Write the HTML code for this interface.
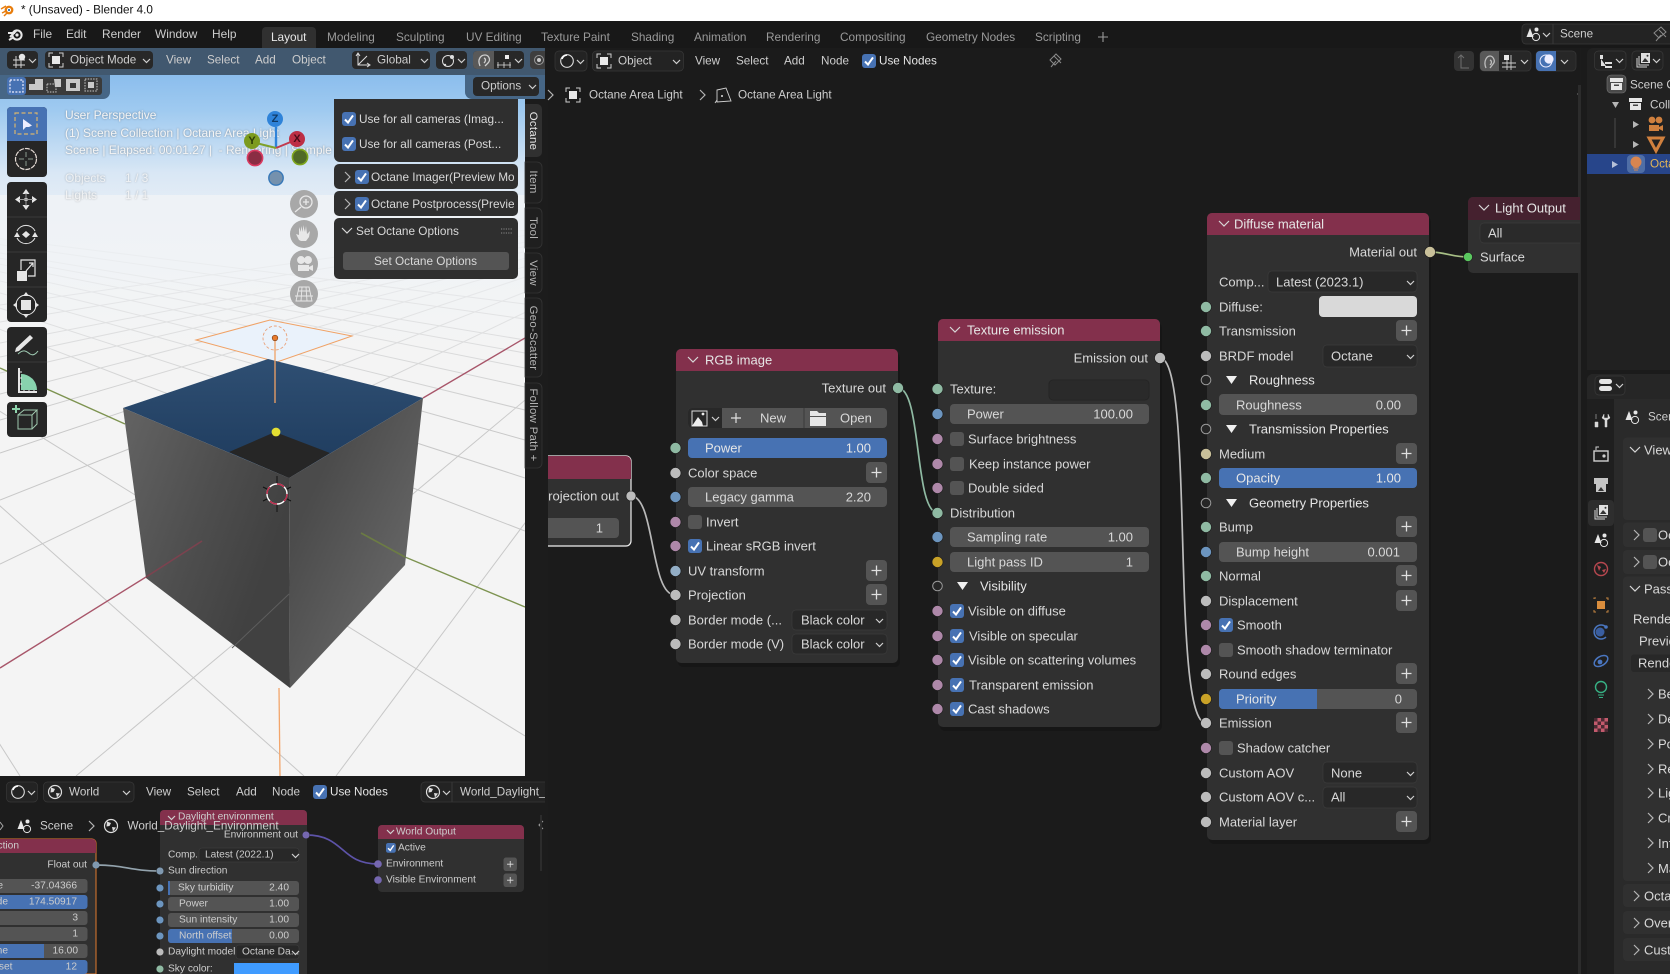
<!DOCTYPE html>
<html><head><meta charset="utf-8"><title>Blender 4.0</title>
<style>
html,body{margin:0;padding:0;width:1670px;height:974px;overflow:hidden;background:#1c1c1c}
svg{display:block;position:absolute;left:0;top:0}
text{font-family:"Liberation Sans",sans-serif;dominant-baseline:central;white-space:pre}
.h{font-size:11.7px;fill:#cdcdcd}
.t{font-size:11.9px;fill:#cdcdcd}
.m{font-size:11.8px;fill:#9a9a9a}
.n{font-size:13px;fill:#d8d8d8}
.p{font-size:11.8px;fill:#d8d8d8}
.w{font-size:13px;fill:#e6e6e6}
.s{font-size:10.2px;fill:#cdcdcd}
.v{font-size:11.4px;letter-spacing:.3px;fill:#b5b5b5;text-anchor:middle}
.hud{font-size:12px;fill:#f4f4f4;filter:drop-shadow(0 0 1px rgba(0,0,0,.35))}
.e{text-anchor:end}
.c{text-anchor:middle}
.f{fill:#545454}.dd{fill:#282828;stroke:#3b3b3b;stroke-width:.7}
.sg{fill:#8fbaa3}.sw{fill:#bcbcbc}.sb{fill:#6c95bf}.sp{fill:#ae88a9}.sy{fill:#c9a227}.st{fill:#c9c09a}.sv{fill:#7567b0}
.so{fill:#262626;stroke:#9a9a9a;stroke-width:1}
</style></head><body>
<svg width="1670" height="974" viewBox="0 0 1670 974" xmlns="http://www.w3.org/2000/svg">
<defs>
<linearGradient id="sky" x1="0" y1="0" x2="0" y2="1"><stop offset="0" stop-color="#7cb4ea"/><stop offset=".25" stop-color="#9fcaf0"/><stop offset=".5" stop-color="#d9e7f5"/><stop offset=".72" stop-color="#eef2f6"/><stop offset="1" stop-color="#f4f4f4"/></linearGradient>
<linearGradient id="fade" x1="0" y1="0" x2="0" y2="1"><stop offset="0" stop-color="#eef2f6" stop-opacity="1"/><stop offset=".3" stop-color="#f0f3f6" stop-opacity=".85"/><stop offset=".65" stop-color="#f3f4f5" stop-opacity=".45"/><stop offset="1" stop-color="#f4f4f4" stop-opacity="0"/></linearGradient>
<linearGradient id="lf" gradientUnits="userSpaceOnUse" x1="125" y1="440" x2="290" y2="500"><stop offset="0" stop-color="#616161"/><stop offset=".55" stop-color="#4e4e4e"/><stop offset="1" stop-color="#414141"/></linearGradient>
<linearGradient id="rf" gradientUnits="userSpaceOnUse" x1="290" y1="540" x2="420" y2="600"><stop offset="0" stop-color="#4b4b4b"/><stop offset="1" stop-color="#6a6a6a"/></linearGradient>
<linearGradient id="tf" x1="0" y1="0" x2="0" y2="1"><stop offset="0" stop-color="#2f4f73"/><stop offset="1" stop-color="#1d3a5c"/></linearGradient>
<g id="ck"><rect width="14" height="14" rx="3" fill="#4772b3"/><path d="M3 7.5 6 10.6 11 3.4" fill="none" stroke="#fff" stroke-width="2"/></g>
<rect id="nk" width="14" height="14" rx="3" fill="#545454"/>
<g id="pl"><rect width="21" height="21" rx="4" fill="#545454"/><path d="M10.5 5.5v10M5.5 10.5h10" stroke="#e0e0e0" stroke-width="1.3"/></g>
<path id="dn" d="M0 0l3.5 3.5L7 0" fill="none" stroke="#d0d0d0" stroke-width="1.2"/>
<path id="nc" d="M0 0l5 5 5-5" fill="none" stroke="#d8d8d8" stroke-width="1.2"/>
<path id="rt" d="M0 0l5 5-5 5" fill="none" stroke="#b5b5b5" stroke-width="1.2"/>
<path id="tr" d="M0 0h11l-5.5 8z" fill="#f0f0f0"/>
<g id="ob"><path d="M0 4V0h4M10 0h4v4M14 10v4h-4M4 14H0v-4" fill="none" stroke="#cfcfcf" stroke-width="1"/><rect x="3" y="3" width="8" height="8" fill="#e8e8e8"/></g>
<g id="nd"><circle cx="7" cy="7" r="6.3" fill="none" stroke="#ddd" stroke-width="1.1"/><path d="M7 1A6 6 0 0 0 2 5" stroke="#fff" stroke-width="1.6" fill="none"/></g>
<g id="wd"><circle cx="7" cy="7" r="6.5" fill="none" stroke="#ddd" stroke-width="1.2"/><path d="M3 2.5l4 1.5-1.5 3-3 .5zM8 8l4 .5-3 4z" fill="#ddd"/></g>
<g id="sc"><path d="M4 1l3.5 9H.5z" fill="#e6e6e6"/><circle cx="10.5" cy="2.5" r="2" fill="#e6e6e6"/><circle cx="10" cy="10" r="3.6" fill="none" stroke="#e6e6e6" stroke-width="1"/></g>
<g id="lyr"><path d="M1 5v9h10M3 3v9h10" fill="none" stroke="#d5d5d5" stroke-width="1"/><rect x="5" y="0" width="9" height="10" fill="#e0e0e0"/><path d="M6 9l3-4 2 2 1.5 2z" fill="#333"/><circle cx="11.5" cy="2.8" r="1" fill="#333"/></g>
<clipPath id="vp"><rect x="0" y="48" width="525" height="728"/></clipPath>
<clipPath id="me"><rect x="548" y="48" width="1032" height="926"/></clipPath>
<clipPath id="be"><rect x="0" y="776" width="545" height="198"/></clipPath>
<clipPath id="p1"><rect x="334" y="164" width="180" height="52"/></clipPath>
</defs>

<!-- title bar -->
<rect width="1670" height="21" fill="#fff"/>
<circle cx="9" cy="10" r="4.4" fill="#e87d0d"/><circle cx="9" cy="10" r="2.1" fill="#fff"/><circle cx="9" cy="10" r="1.1" fill="#2a6fb0"/><path d="M1 9l5-3M2 13l4-2M4 16l3-3" stroke="#e87d0d" stroke-width="1.5"/>
<text x="21" y="10" style="font-size:11.7px;fill:#111">* (Unsaved) - Blender 4.0</text>

<!-- top bar -->
<rect y="21" width="1670" height="27" fill="#181818"/>
<g fill="none" stroke="#e8e8e8" stroke-width="2"><circle cx="17" cy="35" r="4.6"/><path d="M8 33h7M10 37l7-7M9 40l5-3"/></g><circle cx="17" cy="35" r="1.6" fill="#e8e8e8"/>
<text class="t" x="33" y="34">File</text><text class="t" x="66" y="34">Edit</text><text class="t" x="102" y="34">Render</text><text class="t" x="155" y="34">Window</text><text class="t" x="212" y="34">Help</text>
<path d="M262 48V31a4 4 0 0 1 4-4h46a4 4 0 0 1 4 4v17z" fill="#303030"/>
<text class="m" x="271" y="37" style="fill:#e8e8e8">Layout</text>
<text class="m" x="327" y="37">Modeling</text><text class="m" x="396" y="37">Sculpting</text><text class="m" x="466" y="37">UV Editing</text><text class="m" x="541" y="37">Texture Paint</text><text class="m" x="631" y="37">Shading</text><text class="m" x="694" y="37">Animation</text><text class="m" x="766" y="37">Rendering</text><text class="m" x="840" y="37">Compositing</text><text class="m" x="926" y="37">Geometry Nodes</text><text class="m" x="1035" y="37">Scripting</text>
<path d="M1103 32v10M1098 37h10" stroke="#9a9a9a" stroke-width="1.1"/>
<rect x="1522" y="24" width="160" height="20" rx="4" fill="#232323" stroke="#3a3a3a" stroke-width=".7"/><path d="M1553 24v20" stroke="#3a3a3a"/>
<use href="#sc" x="1526" y="27"/><use href="#dn" x="1543" y="33"/>
<text class="h" x="1560" y="34">Scene</text>
<path d="M1656 41l5-6M1659 30l7 7M1661 27l5 5-7 6-5-5z" fill="none" stroke="#8a8a8a" stroke-width="1"/>

<!-- 3D viewport -->
<g clip-path="url(#vp)">
<rect x="0" y="48" width="525" height="250" fill="url(#sky)"/>
<rect x="0" y="298" width="525" height="480" fill="#f4f4f4"/>
<g stroke="#c8c8c8" stroke-width="1" fill="none">
<path d="M770 195L336 776M770 195L76 776M770 195L0 564M770 195L0 500M770 195L0 453M770 195L0 420M770 195L0 394M770 195L0 373M770 195L0 357M770 195L0 343M770 195L0 322M770 195L0 305"/>
<path d="M-350 195L20 776M-350 195L304 776M-350 195L525 736M-350 195L525 531M-350 195L525 478M-350 195L525 440M-350 195L525 410M-350 195L525 387M-350 195L525 368M-350 195L525 353M-350 195L525 340M-350 195L525 319M-350 195L525 304"/>
</g>
<rect x="0" y="195" width="525" height="235" fill="url(#fade)"/>
<path d="M0 668L146 577M423 398L525 338" stroke="#a8566a" stroke-width="1.4"/>
<path d="M0 368L125 424M405 557L525 607" stroke="#7d9350" stroke-width="1.4"/>
<path d="M279 688L280 776" stroke="#f2a56b" stroke-width="1.3"/>
<!-- area light -->
<path d="M196 340L270 320 352 336 277 362z" fill="#eaf2fb" stroke="#f0a266" stroke-width="1"/>
<circle cx="275" cy="338" r="12" fill="none" stroke="#e9a27a" stroke-dasharray="3 2" stroke-width=".9"/>
<!-- cube -->
<path d="M123 408L268 359 423 398 289 478z" fill="url(#tf)"/>
<path d="M229 452L275 432 330 453 289 478z" fill="#262626"/>
<path d="M123 408L289 478 290 688 146 578z" fill="url(#lf)"/>
<path d="M289 478L423 398 405 565 290 688z" fill="url(#rf)"/>
<path d="M146 577L202 541" stroke="#85404f" stroke-width="1.6" opacity=".85"/>
<path d="M361 533L405 557" stroke="#6f8240" stroke-width="1.6" opacity=".85"/>
<path d="M289 594L232 648" stroke="#5e5e5e" stroke-width="1"/>
<path d="M275 338L275 403" stroke="#f0a266" stroke-width="1.3"/>
<circle cx="275" cy="338" r="2.8" fill="#e77b2d" stroke="#7d3a12" stroke-width=".6"/>
<circle cx="276" cy="432" r="4.4" fill="#e3de32"/>
<!-- 3d cursor -->
<path d="M277 476v9M277 503v9M263 487l6 3M285 498l6 3M263 501l6-3M285 490l6-3" stroke="#111" stroke-width="1"/>
<circle cx="277" cy="494" r="10" fill="none" stroke="#fff" stroke-width="1.4"/>
<circle cx="277" cy="494" r="10" fill="none" stroke="#c0284a" stroke-width="1.4" stroke-dasharray="7.8 7.8"/>
<!-- HUD -->
<text class="hud" x="65" y="115">User Perspective</text>
<text class="hud" x="65" y="133">(1) Scene Collection | Octane Area Light</text>
<text class="hud" x="65" y="150">Scene | Elapsed: 00:01.27 |  - Rendering | Sample 5</text>
<text class="hud" x="65" y="178" opacity=".8">Objects</text><text class="hud" x="125" y="178" opacity=".8">1 / 3</text>
<text class="hud" x="65" y="195" opacity=".8">Lights</text><text class="hud" x="125" y="195" opacity=".8">1 / 1</text>
<!-- gizmo -->
<path d="M276 148V127" stroke="#2f83d9" stroke-width="2.4"/><path d="M276 148L293 141" stroke="#c23a4e" stroke-width="2"/><path d="M276 148L256 143" stroke="#7fa12a" stroke-width="2"/>
<circle cx="255" cy="158" r="7.6" fill="#8a2d43" stroke="#da3a60" stroke-width="1.6"/>
<circle cx="300" cy="157" r="7.6" fill="#4f6a26" stroke="#7fa71d" stroke-width="1.6"/>
<circle cx="276" cy="178" r="7.2" fill="#7591ad" stroke="#3778b8" stroke-width="1.4"/>
<circle cx="275" cy="119" r="8" fill="#2f83d9"/><text x="275" y="119" class="c" style="font-size:11px;font-weight:bold;fill:#103a66">Z</text>
<circle cx="297" cy="139" r="8" fill="#bd2f45"/><text x="297" y="139" class="c" style="font-size:11px;font-weight:bold;fill:#4a0c18">X</text>
<circle cx="252" cy="141" r="8" fill="#7c9b1f"/><text x="252" y="141" class="c" style="font-size:11px;font-weight:bold;fill:#2c3a05">Y</text>
<!-- nav buttons -->
<g fill="#a8a8a8"><circle cx="304" cy="204" r="14"/><circle cx="304" cy="234" r="14"/><circle cx="304" cy="264" r="14"/><circle cx="304" cy="294" r="14"/></g>
<g fill="none" stroke="#e8e8e8" stroke-width="1.3"><circle cx="306" cy="202" r="6"/><path d="M301 207l-6 5M306 199v6M303 202h6"/><path d="M299 240l-3-6 3 1v-8l2 5v-6l2 6v-7l2 7 1-6 1 8 3-3-1 6-3 4h-5z" fill="#e8e8e8" stroke="none"/><circle cx="301" cy="260" r="3.3" fill="#e8e8e8"/><circle cx="308" cy="260" r="3.3" fill="#e8e8e8"/><rect x="298" y="265" width="11" height="6" fill="#e8e8e8" stroke="none"/><path d="M309 267l4-2v6l-4-2z" fill="#e8e8e8" stroke="none"/><path d="M299 287h10l3 14h-16zM295 296h18M298 291h12M302 287l-1 14M306 287l1 14" stroke-width=".9"/></g>
</g>

<!-- viewport side strip -->
<rect x="525" y="99" width="23" height="677" fill="#1c1c1c"/>

<!-- viewport header -->
<rect x="0" y="48" width="545" height="27" fill="#41586f"/>
<path d="M0 75H110V92a7 7 0 0 1-7 7H0z" fill="#466686"/>
<path d="M465 75H545V99H472a7 7 0 0 1-7-7z" fill="#466686"/>
<g>
<rect x="7" y="51" width="31" height="18" rx="4" fill="#282828"/>
<path d="M13 60h12M13 65h12M16 56v12M21 56v12" stroke="#ddd" stroke-width=".9"/><circle cx="22" cy="57" r="3.2" fill="#e8e8e8"/><use href="#dn" x="29" y="59"/>
<rect x="45" y="51" width="108" height="18" rx="4" fill="#282828"/><use href="#ob" x="49" y="53"/>
<text class="h" x="70" y="60">Object Mode</text><use href="#dn" x="143" y="59"/>
<text class="h" x="166" y="60">View</text><text class="h" x="207" y="60">Select</text><text class="h" x="255" y="60">Add</text><text class="h" x="292" y="60">Object</text>
<rect x="352" y="51" width="78" height="18" rx="4" fill="#282828"/>
<path d="M358 54v11h11M358 65l9-9M356 56l2-3 2 3M367 63l3 2-3 2" fill="none" stroke="#ddd" stroke-width="1"/>
<text class="h" x="377" y="60">Global</text><use href="#dn" x="421" y="59"/>
<rect x="436" y="51" width="31" height="18" rx="4" fill="#282828"/><circle cx="448" cy="61" r="5.5" fill="none" stroke="#ddd"/><circle cx="452" cy="57" r="2" fill="#ddd"/><circle cx="445" cy="65" r="1.2" fill="#ddd"/><use href="#dn" x="458" y="59"/>
<rect x="473" y="51" width="51" height="18" rx="4" fill="#282828"/><path d="M477 51h17v18h-17a4 4 0 0 1-4-4V55a4 4 0 0 1 4-4z" fill="#595959"/>
<path d="M480 66c-3-7 1-11 5-11s6 5 3 8l-3 3M484 63c2-2 2-4 0-5" fill="none" stroke="#cfcfcf" stroke-width="1.3"/>
<path d="M497 65h14M498 62v6M504 62v6M510 62v6" stroke="#ddd" stroke-width=".8"/><rect x="505" y="55" width="4" height="4" fill="#eee"/><use href="#dn" x="515" y="59"/>
<rect x="530" y="51" width="20" height="18" rx="4" fill="#3e3e3e"/><circle cx="539" cy="60" r="4.5" fill="none" stroke="#9a9a9a"/><circle cx="539" cy="60" r="2" fill="#ccc"/>
</g>
<rect x="7" y="77" width="95" height="18" rx="3" fill="#3a3a3a"/>
<rect x="7" y="77" width="19" height="18" rx="3" fill="#4772b3"/><rect x="10" y="80" width="13" height="12" fill="none" stroke="#eef" stroke-width="1.2" stroke-dasharray="2 1.4"/>
<path d="M29 84h6v-5h8v11H29z" fill="#c9c9c9"/>
<path d="M54 79h7v8h-6" fill="#c9c9c9"/><rect x="47" y="84" width="9" height="8" fill="none" stroke="#c9c9c9" stroke-dasharray="1.5 1.2"/>
<rect x="66" y="79" width="14" height="12" fill="#c9c9c9"/><rect x="70" y="83" width="6" height="5" fill="#3a3a3a"/>
<rect x="85" y="79" width="12" height="12" fill="none" stroke="#c9c9c9" stroke-dasharray="1.5 1.2"/><rect x="88" y="82" width="6" height="6" fill="#c9c9c9"/>
<rect x="473" y="77" width="66" height="19" rx="4" fill="#282828"/><text class="h" x="481" y="86">Options</text><use href="#dn" x="529" y="85"/>

<!-- tools -->
<rect x="7" y="107" width="40" height="70" rx="4" fill="#262626"/>
<path d="M7 141V111a4 4 0 0 1 4-4h32a4 4 0 0 1 4 4v30z" fill="#4772b3"/>
<rect x="15" y="113" width="22" height="21" fill="none" stroke="#d9b56e" stroke-width="1.2" stroke-dasharray="4 2.5"/>
<path d="M23 119v11l3-3 3 0 3-1.5z" fill="#eef"/>
<circle cx="26" cy="159" r="10.5" fill="none" stroke="#e6dcd6" stroke-width="1.2" stroke-dasharray="5 1"/>
<path d="M26 152v5M26 161v5M19 159h5M28 159h5" stroke="#8a9a8e" stroke-width="1"/>
<rect x="7" y="182" width="40" height="140" rx="4" fill="#262626"/>
<path d="M7 217h40M7 252h40M7 287h40" stroke="#3a3a3a"/>
<g fill="#e6e6e6"><path d="M26 189l3.500 5h-7zM26 210l-3.500-5h7zM15 199.500l5-3.500v7zM37 199.500l-5-3.500v7z"/><rect x="24.500" y="198" width="3" height="3"/></g>
<path d="M26 193v13M19 199.500h14" stroke="#9a9a9a" stroke-width="1"/>
<g fill="none" stroke="#e6e6e6" stroke-width="1"><path d="M17 231a10 10 0 0 1 18 0M17 238a10 10 0 0 0 18 0"/></g><path d="M22 234.500l4-3.500 4 3.500-4 3.500z" fill="#e6e6e6"/><path d="M14 237l3-5 3 5zM32 237l3-5 3 5z" fill="#e6e6e6"/>
<rect x="17" y="271" width="10" height="10" fill="#e6e6e6"/><path d="M21 270v-10h14v16H28M26 271l7-8M29 263h4v4" fill="none" stroke="#e6e6e6" stroke-width="1.2"/>
<circle cx="26" cy="305" r="10" fill="none" stroke="#e6e6e6" stroke-width="1"/><rect x="21" y="300" width="10" height="10" fill="#e6e6e6"/><path d="M26 292l3 4h-6zM26 318l3-4h-6zM13 305l4-3v6zM39 305l-4-3v6z" fill="#e6e6e6"/>
<rect x="7" y="327" width="40" height="70" rx="4" fill="#262626"/><path d="M7 362h40" stroke="#3a3a3a"/>
<path d="M16 348l14-13 3 3-14 13-4 1z" fill="#e6e6e6"/><path d="M18 354c6-6 9-2 12 0 3 2 6 0 8-3" fill="none" stroke="#9dc8b0" stroke-width="1"/>
<path d="M19 368v24h18" fill="none" stroke="#e6e6e6" stroke-width="2"/><path d="M21 390V374a16 16 0 0 1 16 16z" fill="#88d3ae"/><path d="M19 372h3M19 378h3M19 384h3M24 392v-2M29 392v-2M34 392v-2" stroke="#e6e6e6"/>
<rect x="7" y="402" width="40" height="35" rx="4" fill="#262626"/>
<path d="M18 415h14v14H18zM18 415l6-5h13l-5 5M37 410v14l-5 5" fill="none" stroke="#9fc8ae" stroke-width="1"/><path d="M16 405v8M12 409h8" stroke="#8ed4ac" stroke-width="2"/>

<!-- N panel -->
<g fill="#2f2f2f">
<path d="M334 99H518V156a6 6 0 0 1-6 6H340a6 6 0 0 1-6-6z"/>
<rect x="334" y="164" width="184" height="25" rx="5"/>
<rect x="334" y="191" width="184" height="25" rx="5"/>
<rect x="334" y="218" width="184" height="61" rx="5"/>
</g>
<use href="#ck" x="342" y="112"/><text class="p" x="359" y="119">Use for all cameras (Imag...</text>
<use href="#ck" x="342" y="137"/><text class="p" x="359" y="144">Use for all cameras (Post...</text>
<use href="#rt" x="345" y="172"/><use href="#ck" x="355" y="170"/>
<use href="#rt" x="345" y="199"/><use href="#ck" x="355" y="197"/>
<g clip-path="url(#p1)"><text class="p" x="371" y="177">Octane Imager(Preview Mo</text><text class="p" x="371" y="204">Octane Postprocess(Previe</text></g>
<use href="#nc" x="342" y="228"/><text class="p" x="356" y="231">Set Octane Options</text>
<path d="M501 229h11M501 233h11" stroke="#777" stroke-width="1.2" stroke-dasharray="1.2 1.2"/>
<rect x="343" y="252" width="166" height="18" rx="3" fill="#545454"/><text class="p c" x="425.500" y="261">Set Octane Options</text>

<!-- side tabs -->
<g fill="#1f1f1f" stroke="#343434" stroke-width=".8">
<path d="M525 162h12a5 5 0 0 1 5 5v31a5 5 0 0 1-5 5h-12z"/><path d="M525 208h12a5 5 0 0 1 5 5v30a5 5 0 0 1-5 5h-12z"/><path d="M525 253h12a5 5 0 0 1 5 5v30a5 5 0 0 1-5 5h-12z"/><path d="M525 298h12a5 5 0 0 1 5 5v69a5 5 0 0 1-5 5h-12z"/><path d="M525 383h12a5 5 0 0 1 5 5v75a5 5 0 0 1-5 5h-12z"/>
</g>
<path d="M525 104h12a5 5 0 0 1 5 5v43a5 5 0 0 1-5 5h-12z" fill="#303030"/>
<text class="v" style="fill:#e6e6e6" transform="translate(533 131) rotate(90)">Octane</text>
<text class="v" transform="translate(533 182) rotate(90)">Item</text>
<text class="v" transform="translate(533 228) rotate(90)">Tool</text>
<text class="v" transform="translate(533 273) rotate(90)">View</text>
<text class="v" transform="translate(533 338) rotate(90)">Geo-Scatter</text>
<text class="v" transform="translate(533 425) rotate(90)">Follow Path +</text>

<!-- main node editor -->
<rect x="548" y="48" width="1032" height="926" fill="#1b1b1b"/>
<rect x="545" y="48" width="3" height="51" fill="#1b1b1b"/>
<!-- header -->
<rect x="555" y="51" width="32" height="20" rx="4" fill="#232323" stroke="#383838" stroke-width=".7"/><use href="#nd" x="560" y="54"/><use href="#dn" x="577" y="60"/>
<rect x="592.500" y="51" width="91" height="20" rx="4" fill="#232323" stroke="#383838" stroke-width=".7"/><use href="#ob" x="597" y="54"/>
<text class="h" x="618" y="61">Object</text><use href="#dn" x="673" y="60"/>
<text class="h" x="695" y="61">View</text><text class="h" x="736" y="61">Select</text><text class="h" x="784" y="61">Add</text><text class="h" x="821" y="61">Node</text>
<use href="#ck" x="862" y="54"/><text class="h" style="fill:#e6e6e6" x="879" y="61">Use Nodes</text>
<path d="M1051 67l5-6M1054 56l7 7M1056 54l5 5-6 6-5-5z" fill="none" stroke="#8a8a8a" stroke-width="1"/>
<use href="#rt" x="548" y="90"/><use href="#ob" x="566" y="88"/><text class="h" x="589" y="95">Octane Area Light</text>
<use href="#rt" x="700" y="90"/><path d="M717 90l9-2 5 13-14 1zM717 100l-2 3" fill="none" stroke="#d0d0d0" stroke-width=".9"/><circle cx="722" cy="96" r="1" fill="#ddd"/><text class="h" x="738" y="95">Octane Area Light</text>
<rect x="1454" y="51" width="20" height="20" rx="4" fill="#333"/><path d="M1458 58l3-3 3 3M1461 55v13h8" fill="none" stroke="#6f6f6f"/>
<rect x="1480" y="51" width="51" height="20" rx="4" fill="#272727" stroke="#383838" stroke-width=".7"/><path d="M1484 51h15v20h-15a4 4 0 0 1-4-4V55a4 4 0 0 1 4-4z" fill="#595959"/>
<path d="M1486 68c-3-7 1-12 4-12s6 5 3 8l-3 4M1490 65c2-2 2-4 0-5" fill="none" stroke="#bdbdbd" stroke-width="1.3"/>
<rect x="1504" y="55" width="5" height="5" fill="#e8e8e8"/><path d="M1502 63h14M1502 67h14M1507 60v10M1511 55v15" stroke="#cfcfcf" stroke-width=".9"/><use href="#dn" x="1521" y="60"/>
<rect x="1536" y="51" width="40" height="20" rx="4" fill="#272727" stroke="#383838" stroke-width=".7"/><path d="M1540 51h16v20h-16a4 4 0 0 1-4-4V55a4 4 0 0 1 4-4z" fill="#4772b3"/>
<circle cx="1546" cy="61" r="6" fill="none" stroke="#eef" stroke-width="1"/><circle cx="1549" cy="59" r="4.600" fill="#eef"/><use href="#dn" x="1561" y="60"/>
<path d="M1582 90l-4 4 4 4" fill="none" stroke="#9a9a9a" stroke-width="1.2"/>
<rect x="1578" y="85" width="3" height="889" fill="#2c2c2c"/>

<g clip-path="url(#me)">
<!-- links -->
<g fill="none" stroke-width="1.7">
<path d="M631 496C655 496 650 595 675 595" stroke="#b8b8b8"/>
<path d="M898 388C922 388 914 513 938 513" stroke="#8fbaa3"/>
<path d="M1160 358C1195 358 1170 723 1206 723" stroke="#bcbcbc"/>
<path d="M1430 252C1445 252 1452 257 1468 257" stroke="#a7bf85"/>
</g>
<!-- fragment node -->
<rect x="520" y="456" width="111" height="90" rx="5" fill="#303030" stroke="#f0f0f0" stroke-width="1.2"/>
<path d="M520 479V461a5 5 0 0 1 5-5h101a5 5 0 0 1 5 5v18z" fill="#83304c"/>
<text class="n e" x="619" y="496">Projection out</text>
<rect x="500" y="518" width="119" height="20" rx="4" class="f"/><text class="n e" x="603" y="528">1</text>

<!-- RGB node -->
<rect x="678" y="353" width="222" height="314" rx="5" fill="#121212" opacity=".5"/>
<rect x="676" y="349" width="222" height="314" rx="5" fill="#303030"/>
<path d="M676 371V354a5 5 0 0 1 5-5h212a5 5 0 0 1 5 5v17z" fill="#83304c"/>
<use href="#nc" x="688" y="357"/><text class="w" x="705" y="360">RGB image</text>
<text class="n e" x="886" y="388">Texture out</text>
<rect x="688" y="408" width="199" height="20" rx="4" fill="#545454"/><path d="M692 408h30v20h-30a4 4 0 0 1-4-4v-12a4 4 0 0 1 4-4z" fill="#282828"/>
<rect x="692" y="411" width="15" height="15" fill="none" stroke="#ddd" stroke-width="1"/><path d="M692 426l6-9 4 5 1 4z" fill="#eee"/><circle cx="703" cy="414" r="1.400" fill="#eee"/><use href="#dn" x="712" y="417"/>
<path d="M736 413v10M731 418h10" stroke="#e0e0e0" stroke-width="1.2"/><text class="n" x="760" y="418">New</text>
<path d="M804 408v20" stroke="#3a3a3a"/><path d="M810 411h7l2 2h7v3h-16zM810 417h16v9h-16z" fill="#e6e6e6"/><text class="n" x="840" y="418">Open</text>
<rect x="688" y="438" width="199" height="20" rx="4" fill="#4772b3"/><text class="w" x="705" y="448">Power</text><text class="w e" x="871" y="448">1.00</text>
<text class="n" x="688" y="473">Color space</text><use href="#pl" x="866" y="462"/>
<rect x="688" y="487" width="199" height="20" rx="4" class="f"/><text class="n" x="705" y="497">Legacy gamma</text><text class="n e" x="871" y="497">2.20</text>
<use href="#nk" x="688" y="515"/><text class="n" x="706" y="522">Invert</text>
<use href="#ck" x="688" y="539"/><text class="n" x="706" y="546">Linear sRGB invert</text>
<text class="n" x="688" y="571">UV transform</text><use href="#pl" x="866" y="560"/>
<text class="n" x="688" y="595">Projection</text><use href="#pl" x="866" y="584"/>
<text class="n" x="688" y="620">Border mode (...</text><rect x="792" y="610" width="95" height="20" rx="4" class="dd"/><text class="n" x="801" y="620">Black color</text><use href="#dn" x="876" y="619"/>
<text class="n" x="688" y="644">Border mode (V)</text><rect x="792" y="634" width="95" height="20" rx="4" class="dd"/><text class="n" x="801" y="644">Black color</text><use href="#dn" x="876" y="643"/>

<!-- Texture emission -->
<rect x="940" y="323" width="222" height="408" rx="5" fill="#121212" opacity=".5"/>
<rect x="938" y="319" width="222" height="408" rx="5" fill="#303030"/>
<path d="M938 341V324a5 5 0 0 1 5-5h212a5 5 0 0 1 5 5v17z" fill="#83304c"/>
<use href="#nc" x="950" y="327"/><text class="w" x="967" y="330">Texture emission</text>
<text class="n e" x="1148" y="358">Emission out</text>
<text class="n" x="950" y="389">Texture:</text><rect x="1049" y="380" width="100" height="20" rx="4" fill="#2a2a2a" stroke="#252525"/>
<rect x="950" y="404" width="199" height="20" rx="4" class="f"/><text class="n" x="967" y="414">Power</text><text class="n e" x="1133" y="414">100.00</text>
<use href="#nk" x="950" y="432"/><text class="n" x="968" y="439">Surface brightness</text>
<use href="#nk" x="950" y="457"/><text class="n" x="969" y="464">Keep instance power</text>
<use href="#nk" x="950" y="481"/><text class="n" x="968" y="488">Double sided</text>
<text class="n" x="950" y="513">Distribution</text>
<rect x="950" y="527" width="199" height="20" rx="4" class="f"/><text class="n" x="967" y="537">Sampling rate</text><text class="n e" x="1133" y="537">1.00</text>
<rect x="950" y="552" width="199" height="20" rx="4" class="f"/><text class="n" x="967" y="562">Light pass ID</text><text class="n e" x="1133" y="562">1</text>
<use href="#tr" x="957" y="582"/><text class="w" x="980" y="586">Visibility</text>
<use href="#ck" x="950" y="604"/><text class="n" x="968" y="611">Visible on diffuse</text>
<use href="#ck" x="950" y="629"/><text class="n" x="969" y="636">Visible on specular</text>
<use href="#ck" x="950" y="653"/><text class="n" x="968" y="660">Visible on scattering volumes</text>
<use href="#ck" x="950" y="678"/><text class="n" x="969" y="685">Transparent emission</text>
<use href="#ck" x="950" y="702"/><text class="n" x="968" y="709">Cast shadows</text>

<!-- Diffuse material -->
<rect x="1209" y="217" width="222" height="627" rx="5" fill="#121212" opacity=".5"/>
<rect x="1207" y="213" width="222" height="627" rx="5" fill="#303030"/>
<path d="M1207 235V218a5 5 0 0 1 5-5h212a5 5 0 0 1 5 5v17z" fill="#83304c"/>
<use href="#nc" x="1219" y="221"/><text class="w" x="1234" y="224">Diffuse material</text>
<text class="n e" x="1417" y="252">Material out</text>
<text class="n" x="1219" y="282">Comp...</text><rect x="1268" y="271" width="149" height="21" rx="4" class="dd"/><text class="n" x="1276" y="282">Latest (2023.1)</text><use href="#dn" x="1407" y="281"/>
<text class="n" x="1219" y="307">Diffuse:</text><rect x="1319" y="296" width="98" height="21" rx="4" fill="#d9d9d9"/>
<text class="n" x="1219" y="331">Transmission</text><use href="#pl" x="1396" y="320"/>
<text class="n" x="1219" y="356">BRDF model</text><rect x="1323" y="345" width="94" height="22" rx="4" class="dd"/><text class="n" x="1331" y="356">Octane</text><use href="#dn" x="1407" y="355"/>
<use href="#tr" x="1226" y="376"/><text class="w" x="1249" y="380">Roughness</text>
<rect x="1219" y="394" width="198" height="21" rx="4" class="f"/><text class="n" x="1236" y="405">Roughness</text><text class="n e" x="1401" y="405">0.00</text>
<use href="#tr" x="1226" y="425"/><text class="w" x="1249" y="429">Transmission Properties</text>
<text class="n" x="1219" y="454">Medium</text><use href="#pl" x="1396" y="443"/>
<rect x="1219" y="468" width="198" height="20" rx="4" fill="#4772b3"/><text class="w" x="1236" y="478">Opacity</text><text class="w e" x="1401" y="478">1.00</text>
<use href="#tr" x="1226" y="499"/><text class="w" x="1249" y="503">Geometry Properties</text>
<text class="n" x="1219" y="527">Bump</text><use href="#pl" x="1396" y="516"/>
<rect x="1219" y="542" width="198" height="20" rx="4" class="f"/><text class="n" x="1236" y="552">Bump height</text><text class="n e" x="1400" y="552">0.001</text>
<text class="n" x="1219" y="576">Normal</text><use href="#pl" x="1396" y="565"/>
<text class="n" x="1219" y="601">Displacement</text><use href="#pl" x="1396" y="590"/>
<use href="#ck" x="1219" y="618"/><text class="n" x="1237" y="625">Smooth</text>
<use href="#nk" x="1219" y="643"/><text class="n" x="1237" y="650">Smooth shadow terminator</text>
<text class="n" x="1219" y="674">Round edges</text><use href="#pl" x="1396" y="663"/>
<rect x="1219" y="689" width="198" height="20" rx="4" class="f"/><path d="M1223 689h94v20h-94a4 4 0 0 1-4-4v-12a4 4 0 0 1 4-4z" fill="#4772b3"/><text class="w" x="1236" y="699">Priority</text><text class="n e" x="1402" y="699">0</text>
<text class="n" x="1219" y="723">Emission</text><use href="#pl" x="1396" y="712"/>
<use href="#nk" x="1219" y="741"/><text class="n" x="1237" y="748">Shadow catcher</text>
<text class="n" x="1219" y="773">Custom AOV</text><rect x="1323" y="762" width="94" height="21" rx="4" class="dd"/><text class="n" x="1331" y="773">None</text><use href="#dn" x="1407" y="772"/>
<text class="n" x="1219" y="797">Custom AOV c...</text><rect x="1323" y="787" width="94" height="21" rx="4" class="dd"/><text class="n" x="1331" y="797">All</text><use href="#dn" x="1407" y="796"/>
<text class="n" x="1219" y="822">Material layer</text><use href="#pl" x="1396" y="811"/>

<!-- Light Output -->
<rect x="1468" y="197" width="130" height="76" rx="5" fill="#303030"/>
<path d="M1468 220V202a5 5 0 0 1 5-5h125v23z" fill="#45212f"/>
<use href="#nc" x="1479" y="205"/><text class="w" x="1495" y="208">Light Output</text>
<rect x="1480" y="223" width="120" height="20" rx="4" fill="#2a2a2a" stroke="#3a3a3a" stroke-width=".7"/><text class="n" x="1488" y="233">All</text>
<text class="n" x="1480" y="257">Surface</text>

<!-- sockets -->
<g stroke="#1c1c1c" stroke-width=".6">
<circle class="sw" cx="631" cy="496" r="5"/>
<circle class="sg" cx="898" cy="388" r="5.500"/><circle class="sg" cx="675.500" cy="448" r="5.500"/><circle class="sw" cx="675.500" cy="473" r="5.500"/><circle class="sb" cx="675.500" cy="497" r="5.500"/><circle class="sp" cx="675.500" cy="522" r="5.500"/><circle class="sp" cx="675.500" cy="546" r="5.500"/><circle cx="675.500" cy="571" r="5.500" fill="#93aec6"/><circle class="sw" cx="675.500" cy="595" r="5.500"/><circle class="sw" cx="675.500" cy="620" r="5.500"/><circle class="sw" cx="675.500" cy="644" r="5.500"/>
<circle class="sw" cx="1160" cy="358" r="5.500"/><circle class="sg" cx="937.500" cy="389" r="5.500"/><circle class="sb" cx="937.500" cy="414" r="5.500"/><circle class="sp" cx="937.500" cy="439" r="5.500"/><circle class="sp" cx="937.500" cy="464" r="5.500"/><circle class="sp" cx="937.500" cy="488" r="5.500"/><circle class="sg" cx="937.500" cy="513" r="5.500"/><circle class="sb" cx="937.500" cy="537" r="5.500"/><circle class="sy" cx="937.500" cy="562" r="5.500"/><circle class="sp" cx="937.500" cy="611" r="5.500"/><circle class="sp" cx="937.500" cy="636" r="5.500"/><circle class="sp" cx="937.500" cy="660" r="5.500"/><circle class="sp" cx="937.500" cy="685" r="5.500"/><circle class="sp" cx="937.500" cy="709" r="5.500"/>
<circle class="st" cx="1430" cy="252" r="5.500"/><circle class="sg" cx="1206" cy="307" r="5.500"/><circle class="sg" cx="1206" cy="331" r="5.500"/><circle class="sw" cx="1206" cy="356" r="5.500"/><circle class="sg" cx="1206" cy="405" r="5.500"/><circle class="st" cx="1206" cy="454" r="5.500"/><circle class="sg" cx="1206" cy="478" r="5.500"/><circle class="sg" cx="1206" cy="527" r="5.500"/><circle class="sb" cx="1206" cy="552" r="5.500"/><circle class="sg" cx="1206" cy="576" r="5.500"/><circle class="sw" cx="1206" cy="601" r="5.500"/><circle class="sp" cx="1206" cy="625" r="5.500"/><circle class="sp" cx="1206" cy="650" r="5.500"/><circle class="sw" cx="1206" cy="674" r="5.500"/><circle class="sy" cx="1206" cy="699" r="5.500"/><circle class="sw" cx="1206" cy="723" r="5.500"/><circle class="sp" cx="1206" cy="748" r="5.500"/><circle class="sw" cx="1206" cy="773" r="5.500"/><circle class="sw" cx="1206" cy="797" r="5.500"/><circle class="sw" cx="1206" cy="822" r="5.500"/>
<circle cx="1468" cy="257" r="4.500" fill="#5ac85f"/>
</g>
<circle class="so" cx="937.500" cy="586" r="4.800"/><circle class="so" cx="1206" cy="380" r="4.800"/><circle class="so" cx="1206" cy="429" r="4.800"/><circle class="so" cx="1206" cy="503" r="4.800"/>
</g>

<!-- bottom node editor -->
<rect x="0" y="776" width="545" height="198" fill="#1c1c1c"/>
<rect x="525" y="776" width="23" height="30" fill="#1c1c1c"/>
<g clip-path="url(#be)">
<rect x="6.500" y="782" width="31" height="20" rx="4" fill="#232323" stroke="#383838" stroke-width=".7"/><use href="#nd" x="11" y="785"/><use href="#dn" x="28" y="791"/>
<rect x="43.500" y="782" width="90.500" height="20" rx="4" fill="#232323" stroke="#383838" stroke-width=".7"/><use href="#wd" x="48" y="785"/><text class="h" x="69" y="792">World</text><use href="#dn" x="123" y="791"/>
<text class="h" x="146" y="792">View</text><text class="h" x="187" y="792">Select</text><text class="h" x="236" y="792">Add</text><text class="h" x="272" y="792">Node</text>
<use href="#ck" x="313" y="785"/><text class="h" style="fill:#e6e6e6" x="330" y="792">Use Nodes</text>
<rect x="421" y="782" width="130" height="20" rx="4" fill="#232323" stroke="#383838" stroke-width=".7"/><path d="M452 782v20" stroke="#383838"/><use href="#wd" x="426" y="785"/><use href="#dn" x="443" y="791"/>
<text class="h" x="460" y="792">World_Daylight_E</text>

<g fill="none" stroke-width="1.7"><path d="M96 865C125 865 130 871 160 871" stroke="#93a3ad"/><path d="M306 835C345 835 340 864 378 864" stroke="#5d53a8"/></g>
<!-- left node -->
<path d="M-40 974V843a4 4 0 0 1 4-4H92a4 4 0 0 1 4 4V974z" fill="#303030" stroke="#e07a2e" stroke-width="1"/>
<path d="M-40 853V843a4 4 0 0 1 4-4H92a4 4 0 0 1 4 4v10z" fill="#83304c"/>
<text class="s e" x="19" y="846">ction</text>
<text class="s e" x="87" y="865">Float out</text>
<rect x="-10" y="879" width="97.500" height="14" rx="3" class="f"/><text class="s e" x="3" y="886">e</text><text class="s e" x="77" y="886">-37.04366</text>
<rect x="-10" y="895" width="97.500" height="14" rx="3" fill="#4772b3"/><text class="s e" x="8" y="902">de</text><text class="s e" x="77" y="902">174.50917</text>
<rect x="-10" y="911" width="97.500" height="14" rx="3" class="f"/><text class="s e" x="78" y="918">3</text>
<rect x="-10" y="927" width="97.500" height="14" rx="3" class="f"/><text class="s e" x="78" y="934">1</text>
<rect x="-10" y="944" width="97.500" height="14" rx="3" class="f"/><rect x="-10" y="944" width="54" height="14" fill="#4772b3"/><text class="s e" x="8" y="951">ne</text><text class="s e" x="78" y="951">16.00</text>
<rect x="-10" y="960" width="97.500" height="14" rx="3" fill="#4772b3"/><text class="s e" x="12.500" y="967">fset</text><text class="s e" x="77" y="967">12</text>
<circle cx="96" cy="865" r="3.600" fill="#8099b0"/>

<!-- Daylight -->
<path d="M160 974V814a4 4 0 0 1 4-4h139a4 4 0 0 1 4 4V974z" fill="#303030"/>
<path d="M160 825V814a4 4 0 0 1 4-4h139a4 4 0 0 1 4 4v11z" fill="#83304c"/>
<use href="#dn" x="168" y="816"/><text class="s" x="178" y="817">Daylight environment</text>
<text class="s e" x="298" y="835">Environment out</text>
<text class="s" x="168" y="855">Comp...</text><rect x="199" y="848" width="100" height="14" rx="3" class="dd"/><text class="s" x="205" y="855">Latest (2022.1)</text><use href="#dn" x="292" y="854"/>
<text class="s" x="168" y="871">Sun direction</text>
<rect x="168" y="881" width="131" height="14" rx="3" class="f"/><rect x="168" y="881" width="2" height="14" fill="#4772b3"/><text class="s" x="178" y="888">Sky turbidity</text><text class="s e" x="289" y="888">2.40</text>
<rect x="168" y="897" width="131" height="14" rx="3" class="f"/><text class="s" x="179" y="904">Power</text><text class="s e" x="289" y="904">1.00</text>
<rect x="168" y="913" width="131" height="14" rx="3" class="f"/><text class="s" x="179" y="920">Sun intensity</text><text class="s e" x="289" y="920">1.00</text>
<rect x="168" y="929" width="131" height="14" rx="3" class="f"/><path d="M171 929h61v14h-61a3 3 0 0 1-3-3v-8a3 3 0 0 1 3-3z" fill="#4772b3"/><text class="s" x="179" y="936">North offset</text><text class="s e" x="289" y="936">0.00</text>
<text class="s" x="168" y="952">Daylight model</text><rect x="236" y="945" width="63" height="14" rx="3" class="dd"/><text class="s" x="242" y="952">Octane Da...</text><use href="#dn" x="292" y="951"/>
<text class="s" x="168" y="969">Sky color:</text><rect x="234" y="963" width="65" height="11" fill="#3f9bff"/>
<g stroke="#1c1c1c" stroke-width=".4"><circle cx="306" cy="835" r="3.800" class="sv"/><circle cx="160" cy="871" r="3.800" fill="#8099b0"/><circle cx="160" cy="888" r="3.800" class="sb"/><circle cx="160" cy="904" r="3.800" class="sb"/><circle cx="160" cy="920" r="3.800" class="sb"/><circle cx="160" cy="936" r="3.800" class="sb"/><circle cx="160" cy="952" r="3.800" class="sw"/><circle cx="160" cy="969" r="3.800" class="sg"/></g>

<!-- World output -->
<rect x="378" y="825" width="146" height="67" rx="4" fill="#303030"/>
<path d="M378 839V829a4 4 0 0 1 4-4H520a4 4 0 0 1 4 4v10z" fill="#83304c"/>
<use href="#dn" x="387" y="830"/><text class="s" x="396" y="832">World Output</text>
<g transform="translate(386 843) scale(.7)"><use href="#ck"/></g><text class="s" x="398" y="848">Active</text>
<text class="s" x="386" y="864">Environment</text><g transform="translate(503.500 857.500) scale(.64)"><use href="#pl"/></g>
<text class="s" x="386" y="880">Visible Environment</text><g transform="translate(503.500 873.500) scale(.64)"><use href="#pl"/></g>
<circle cx="378" cy="864" r="3.800" class="sv"/><circle cx="378" cy="880" r="3.800" class="sv"/>
<!-- breadcrumb on top of nodes -->
<path d="M0 822l3 4-3 4" fill="none" stroke="#a5a5a5"/>
<use href="#sc" x="17" y="819"/><text class="h" x="40" y="826">Scene</text>
<use href="#rt" transform="translate(89 821)"/>
<use href="#wd" x="104" y="819"/><text class="h" x="127.500" y="826">World_Daylight_Environment</text>
<path d="M543 821l-4 4 4 4" fill="none" stroke="#9a9a9a" stroke-width="1.1"/>
<rect x="540" y="815" width="2" height="56" fill="#2c2c2c"/>
</g>

<!-- right dark gutter -->
<rect x="1581" y="48" width="89" height="926" fill="#1b1b1b"/>
<!-- outliner -->
<path d="M1587 370V54a6 6 0 0 1 6-6h77v322z" fill="#212121"/>
<rect x="1594.500" y="51" width="31.500" height="19" rx="4" fill="#232323" stroke="#3a3a3a" stroke-width=".7"/><path d="M1600 55h3v4h-3zM1601 59v7h5M1605 62h7v2h-7zM1605 66h7v2h-7z" fill="#e0e0e0"/><use href="#dn" x="1616" y="59"/>
<rect x="1632" y="51" width="31" height="19" rx="4" fill="#232323" stroke="#3a3a3a" stroke-width=".7"/><use href="#lyr" x="1636" y="53"/><use href="#dn" x="1653" y="59"/>
<rect x="1607" y="75" width="19" height="18" rx="4" fill="#4a4a4a" stroke="#777" stroke-width=".6"/><path d="M1610 78h13v4h-13zM1611 83h11v7h-11z" fill="#e6e6e6"/><rect x="1614" y="84.500" width="5" height="1.500" fill="#444"/>
<text class="h" x="1630" y="85">Scene Collection</text>
<path d="M1612 102h7l-3.500 6z" fill="#b5b5b5"/><path d="M1629 98h13v4h-13zM1630 103h11v7h-11z" fill="#e6e6e6"/><rect x="1633" y="104.500" width="5" height="1.500" fill="#444"/>
<text class="h" x="1650" y="105">Collection</text>
<path d="M1615 118v30" stroke="#4a4a4a"/>
<path d="M1633 121v7l6-3.500z" fill="#b5b5b5"/><circle cx="1652" cy="120" r="3.400" fill="#d0803e"/><circle cx="1659" cy="120" r="3.400" fill="#d0803e"/><rect x="1649" y="125" width="10" height="6" fill="#d0803e"/><path d="M1659 127l4-2v6l-4-2z" fill="#d0803e"/>
<path d="M1633 141v7l6-3.500z" fill="#b5b5b5"/><path d="M1649 138h14l-7 13z" fill="none" stroke="#d0803e" stroke-width="3"/>
<rect x="1587" y="154" width="83" height="20" fill="#27458a"/>
<path d="M1612 161v7l6-3.500z" fill="#b5c0d8"/><rect x="1627" y="155" width="18" height="18" rx="4" fill="#4f6ea6"/><circle cx="1636" cy="162" r="5.500" fill="#d88550"/><path d="M1633 168h6M1634 170h4" stroke="#d88550"/>
<text class="h" x="1650" y="164" style="fill:#e2b558">Octane Area Light</text>

<!-- properties -->
<path d="M1587 974V380a6 6 0 0 1 6-6h77v600z" fill="#2a2a2a"/>
<rect x="1587" y="399" width="27" height="575" fill="#1f1f1f"/>
<path d="M1587 399V380a6 6 0 0 1 6-6h77v25z" fill="#262626"/>
<rect x="1595" y="376" width="30" height="19" rx="4" fill="#232323" stroke="#3a3a3a" stroke-width=".7"/><rect x="1599" y="379" width="13" height="5" rx="2.500" fill="#e6e6e6"/><rect x="1599" y="386" width="13" height="5" rx="2.500" fill="#e6e6e6"/><use href="#dn" x="1616" y="384"/>
<rect x="1588" y="500" width="26" height="26" rx="4" fill="#2e2e2e"/>
<path d="M1596 414v5M1595 422h3v5h-3zM1604 414l-2 4 3 2v7h2v-7l3-2-2-4v4h-4z" fill="#d8d8d8" stroke="#d8d8d8" stroke-width=".5"/>
<rect x="1594" y="451" width="14" height="10" fill="none" stroke="#d0d0d0" stroke-width="1.400"/><path d="M1596 450v-3h3" stroke="#d0d0d0" fill="none"/><circle cx="1604" cy="456" r="1.600" fill="#d0d0d0"/>
<path d="M1594 478h14v6h-14zM1596 484h10v8h-10z" fill="#c5c5c5"/><path d="M1598 491l3-4 3 4z" fill="#333"/>
<use href="#lyr" x="1594" y="505"/>
<use href="#sc" x="1594" y="533"/>
<circle cx="1601" cy="569" r="6.500" fill="none" stroke="#b6474f" stroke-width="1.400"/><path d="M1597 565l4 2-2 4zM1602 570l4-1-2 4z" fill="#b6474f"/>
<path d="M1594 599v-1h2M1606 598h2v2M1608 610v2h-2M1596 612h-2v-2" fill="none" stroke="#c48440"/><rect x="1597" y="601" width="8" height="8" fill="#d98d3d"/>
<circle cx="1600" cy="632" r="4.500" fill="#3a5ea0"/><path d="M1606 637a7 7 0 1 1 0-10" fill="none" stroke="#4a76c0" stroke-width="1.500"/><circle cx="1606" cy="627" r="1.800" fill="#4a76c0"/>
<ellipse cx="1601" cy="661" rx="7.500" ry="4.500" fill="none" stroke="#4a76c0" stroke-width="1.500" transform="rotate(-32 1601 661)"/><circle cx="1600" cy="662" r="2.400" fill="#4a76c0"/>
<circle cx="1601" cy="687" r="5.500" fill="none" stroke="#37b184" stroke-width="1.400"/><path d="M1598 695h6M1599 697.500h4" stroke="#37b184"/>
<rect x="1594" y="718" width="14" height="14" fill="#c25a6c"/><path d="M1594 718h3.500v3.500h-3.500zM1601 718h3.500v3.500H1601zM1597.500 721.500h3.500v3.500h-3.500zM1604.500 721.500h3.500v3.500h-3.500zM1594 725h3.500v3.500h-3.500zM1601 725h3.500v3.500H1601zM1597.500 728.500h3.500v3.500h-3.500zM1604.500 728.500h3.500v3.500h-3.500z" fill="#4a2a33"/>
<use href="#sc" x="1625" y="410"/><text class="h" x="1648" y="417">Scene</text>
<g fill="#303030">
<rect x="1623" y="437.500" width="60" height="82.500" rx="4"/><rect x="1623" y="522.500" width="60" height="24.500" rx="4"/><rect x="1623" y="550" width="60" height="24" rx="4"/><rect x="1623" y="576.500" width="60" height="304.500" rx="4"/><rect x="1623" y="884" width="60" height="23" rx="4"/><rect x="1623" y="911" width="60" height="23" rx="4"/><rect x="1623" y="938" width="60" height="23" rx="4"/>
</g>
<use href="#nc" x="1630" y="447"/><text class="n" x="1644" y="450">View Layer</text>
<use href="#rt" x="1634" y="530"/><use href="#nk" x="1643" y="528"/><text class="n" x="1658" y="535">Octane</text>
<use href="#rt" x="1634" y="557"/><use href="#nk" x="1643" y="555"/><text class="n" x="1658" y="562">Octane</text>
<use href="#nc" x="1630" y="586"/><text class="n" x="1644" y="589">Passes</text>
<text class="n" x="1633" y="619">Render Passes</text>
<text class="n" x="1639" y="641">Preview</text>
<rect x="1631" y="654.500" width="50" height="17.500" rx="3" fill="#282828"/><text class="n" x="1638" y="663">Render</text>
<use href="#rt" x="1648" y="689"/><text class="n" x="1658" y="694">Beauty</text>
<use href="#rt" x="1648" y="714"/><text class="n" x="1658" y="719">Denoise</text>
<use href="#rt" x="1648" y="739"/><text class="n" x="1658" y="744">Post</text>
<use href="#rt" x="1648" y="764"/><text class="n" x="1658" y="769">Render</text>
<use href="#rt" x="1648" y="788"/><text class="n" x="1658" y="793">Light</text>
<use href="#rt" x="1648" y="813"/><text class="n" x="1658" y="818">Crypto</text>
<use href="#rt" x="1648" y="838"/><text class="n" x="1658" y="843.500">Info</text>
<use href="#rt" x="1648" y="863"/><text class="n" x="1658" y="868.500">Material</text>
<use href="#rt" x="1634" y="891"/><text class="n" x="1644" y="896">Octane</text>
<use href="#rt" x="1634" y="918"/><text class="n" x="1644" y="923">Override</text>
<use href="#rt" x="1634" y="945"/><text class="n" x="1644" y="950">Custom</text>
</svg>
</body></html>
